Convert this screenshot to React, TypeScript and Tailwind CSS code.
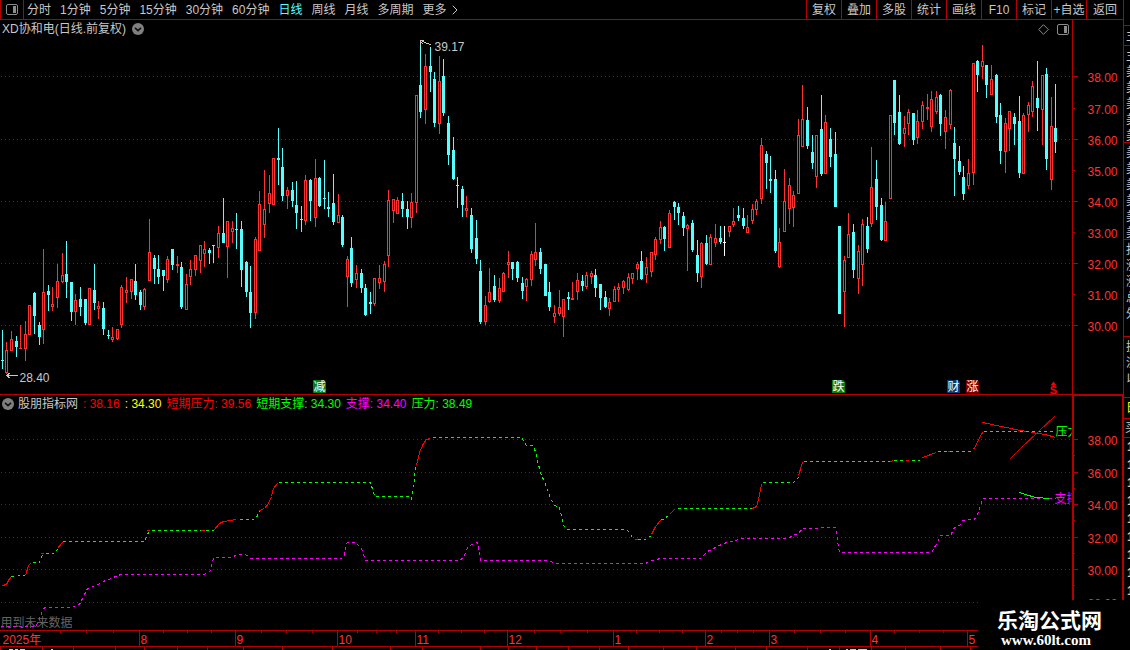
import { ChevronRight } from "lucide-react";

const RED = "#ff3232";
const CYAN = "#54ffff";
const LINE = "#b40000";
const GREEN = "#00ff00";
const MAGENTA = "#ff00ff";

const FONT =
  "font-['Liberation_Sans','Noto_Sans_CJK_SC',sans-serif] text-[12px]";

const PERIODS = [
  "分时",
  "1分钟",
  "5分钟",
  "15分钟",
  "30分钟",
  "60分钟",
  "日线",
  "周线",
  "月线",
  "多周期",
];

const TOOLS = ["复权", "叠加", "多股", "统计", "画线", "F10", "标记", "+自选", "返回"];

type Kind = "r" | "c" | "w";
// x, high, body top, body bottom, low, kind
type Candle = [number, number, number, number, number, Kind];

const CANDLES: Candle[] = [
  [2, 330, 360, 361, 369, "c"], [6, 342, 350, 373, 374, "r"], [11, 331, 339, 351, 351, "r"],
  [16, 336, 341, 347, 357, "c"], [20, 325, 348, 349, 349, "r"], [25, 321, 334, 349, 361, "r"],
  [29, 305, 305, 335, 335, "r"], [34, 292, 293, 316, 334, "c"], [39, 322, 325, 337, 345, "c"],
  [43, 249, 292, 330, 344, "r"], [48, 285, 291, 295, 311, "c"], [52, 287, 304, 307, 311, "r"],
  [57, 264, 281, 298, 308, "r"], [62, 253, 275, 282, 283, "r"], [66, 241, 274, 282, 298, "c"],
  [71, 282, 282, 312, 321, "c"], [75, 294, 300, 312, 325, "r"], [80, 287, 299, 307, 316, "c"],
  [85, 299, 299, 323, 325, "c"], [89, 288, 288, 325, 325, "r"], [94, 264, 290, 303, 310, "c"],
  [98, 301, 306, 309, 319, "r"], [103, 302, 308, 329, 335, "c"], [108, 330, 335, 336, 339, "c"],
  [112, 327, 337, 340, 342, "r"], [117, 329, 329, 339, 340, "r"], [121, 285, 287, 325, 328, "r"],
  [126, 277, 290, 293, 303, "r"], [131, 279, 279, 292, 299, "r"], [135, 264, 281, 295, 300, "c"],
  [140, 290, 292, 305, 310, "c"], [144, 288, 289, 307, 310, "r"], [149, 219, 252, 281, 281, "r"],
  [154, 255, 258, 269, 284, "c"], [158, 255, 269, 277, 284, "c"], [163, 270, 270, 276, 291, "c"],
  [167, 256, 259, 280, 283, "r"], [172, 249, 249, 265, 270, "c"], [177, 256, 264, 266, 273, "r"],
  [181, 262, 267, 307, 309, "c"], [186, 274, 284, 310, 310, "r"], [190, 260, 269, 277, 285, "r"],
  [195, 255, 255, 270, 276, "r"], [200, 245, 245, 261, 273, "r"], [204, 241, 249, 254, 267, "r"],
  [209, 248, 250, 253, 264, "c"], [213, 245, 245, 246, 263, "c"], [218, 226, 233, 248, 258, "r"],
  [223, 198, 233, 243, 243, "c"], [227, 221, 221, 247, 278, "r"], [232, 221, 228, 232, 243, "r"],
  [236, 213, 229, 230, 249, "c"], [241, 221, 229, 270, 287, "c"], [246, 261, 262, 292, 297, "c"],
  [250, 266, 292, 313, 328, "c"], [255, 237, 239, 313, 319, "r"], [259, 191, 204, 251, 251, "r"],
  [264, 170, 209, 225, 238, "r"], [269, 175, 193, 204, 213, "r"], [273, 158, 158, 205, 205, "r"],
  [278, 128, 158, 160, 185, "c"], [282, 148, 167, 196, 201, "c"], [287, 187, 190, 196, 209, "r"],
  [292, 182, 190, 201, 207, "c"], [296, 181, 205, 213, 229, "c"], [301, 206, 219, 220, 232, "c"],
  [305, 175, 180, 221, 225, "r"], [310, 179, 180, 201, 221, "c"], [315, 159, 178, 218, 227, "r"],
  [319, 177, 178, 206, 207, "c"], [324, 160, 198, 199, 209, "c"], [328, 192, 207, 209, 217, "c"],
  [333, 174, 203, 222, 225, "c"], [338, 194, 215, 223, 223, "r"], [342, 215, 217, 245, 247, "c"],
  [347, 256, 259, 277, 307, "r"], [351, 237, 248, 283, 287, "c"], [356, 265, 273, 280, 288, "r"],
  [361, 269, 273, 288, 293, "c"], [365, 284, 288, 315, 316, "c"], [370, 292, 302, 304, 314, "c"],
  [374, 278, 278, 304, 306, "r"], [379, 265, 278, 283, 289, "r"], [384, 261, 264, 282, 292, "r"],
  [388, 190, 200, 256, 267, "r"], [393, 199, 199, 211, 223, "r"], [397, 197, 200, 214, 214, "r"],
  [402, 193, 201, 209, 217, "c"], [407, 201, 209, 217, 229, "c"], [411, 193, 202, 218, 228, "r"],
  [416, 95, 95, 203, 213, "r"], [420, 42, 85, 112, 118, "c"], [425, 54, 66, 110, 124, "r"],
  [430, 47, 66, 72, 92, "c"], [434, 72, 79, 123, 127, "c"], [439, 56, 81, 124, 134, "r"],
  [443, 59, 76, 113, 116, "c"], [448, 116, 123, 155, 165, "c"], [453, 137, 150, 179, 180, "c"],
  [457, 177, 185, 186, 208, "c"], [462, 186, 189, 205, 217, "c"], [466, 196, 208, 211, 217, "r"],
  [471, 208, 215, 249, 253, "c"], [476, 220, 238, 259, 264, "c"], [480, 260, 271, 322, 324, "c"],
  [485, 296, 305, 322, 325, "r"], [489, 268, 292, 302, 303, "r"], [494, 275, 286, 300, 302, "c"],
  [499, 278, 288, 301, 303, "r"], [503, 272, 273, 292, 292, "r"], [508, 251, 262, 265, 278, "r"],
  [512, 262, 262, 269, 280, "c"], [517, 261, 262, 278, 282, "c"], [522, 277, 283, 291, 299, "c"],
  [526, 278, 279, 287, 301, "r"], [531, 251, 254, 280, 286, "r"], [535, 223, 252, 260, 266, "r"],
  [540, 248, 252, 269, 274, "c"], [545, 264, 264, 296, 296, "c"], [549, 282, 292, 307, 311, "c"],
  [554, 305, 313, 317, 323, "r"], [559, 290, 307, 314, 316, "r"], [563, 299, 299, 317, 337, "r"],
  [568, 292, 297, 299, 310, "c"], [572, 282, 298, 300, 300, "r"], [577, 273, 280, 292, 300, "r"],
  [582, 275, 281, 286, 291, "c"], [586, 272, 275, 287, 289, "r"], [591, 271, 273, 277, 284, "r"],
  [595, 269, 275, 288, 297, "c"], [600, 284, 284, 298, 310, "c"], [605, 291, 297, 307, 308, "c"],
  [609, 298, 302, 309, 316, "r"], [614, 286, 289, 302, 302, "r"], [618, 283, 287, 290, 302, "r"],
  [623, 280, 281, 288, 294, "r"], [628, 273, 277, 290, 291, "r"], [632, 273, 273, 279, 284, "r"],
  [637, 262, 264, 269, 280, "r"], [641, 251, 261, 279, 280, "c"], [646, 257, 267, 275, 283, "r"],
  [651, 252, 252, 272, 277, "r"], [655, 237, 239, 255, 260, "r"], [660, 221, 227, 240, 244, "r"],
  [664, 226, 227, 239, 251, "c"], [669, 210, 213, 248, 248, "r"], [674, 201, 202, 207, 220, "c"],
  [678, 203, 207, 213, 225, "c"], [683, 212, 216, 228, 236, "c"], [687, 224, 225, 229, 271, "r"],
  [692, 220, 223, 250, 252, "c"], [697, 240, 255, 273, 282, "c"], [701, 242, 243, 277, 288, "r"],
  [706, 235, 243, 264, 265, "c"], [710, 234, 237, 265, 265, "r"], [715, 224, 238, 243, 247, "r"],
  [720, 226, 238, 242, 244, "c"], [724, 226, 242, 243, 256, "w"], [729, 226, 226, 232, 237, "r"],
  [733, 208, 221, 225, 227, "r"], [738, 206, 215, 218, 221, "c"], [743, 208, 218, 226, 229, "c"],
  [747, 215, 227, 233, 233, "r"], [752, 204, 209, 221, 224, "r"], [756, 199, 201, 210, 215, "r"],
  [761, 138, 145, 199, 204, "r"], [766, 151, 154, 163, 189, "c"], [770, 156, 179, 181, 193, "c"],
  [775, 170, 179, 251, 253, "c"], [779, 228, 242, 267, 268, "r"], [784, 169, 201, 232, 232, "r"],
  [789, 178, 185, 209, 224, "r"], [793, 191, 195, 208, 227, "r"], [798, 119, 135, 194, 194, "r"],
  [802, 85, 119, 147, 147, "r"], [807, 107, 120, 146, 149, "c"], [812, 135, 152, 163, 169, "c"],
  [816, 135, 135, 177, 188, "r"], [821, 95, 129, 174, 176, "c"], [825, 115, 122, 174, 174, "r"],
  [830, 128, 139, 157, 167, "c"], [835, 132, 154, 207, 207, "c"], [839, 226, 226, 314, 314, "c"],
  [844, 256, 260, 292, 327, "r"], [848, 213, 234, 258, 258, "r"], [853, 224, 232, 270, 278, "c"],
  [858, 245, 251, 279, 294, "r"], [862, 219, 224, 265, 286, "r"], [867, 217, 226, 249, 253, "c"],
  [871, 147, 187, 224, 227, "r"], [876, 160, 179, 207, 220, "c"], [881, 198, 205, 240, 241, "c"],
  [885, 202, 221, 241, 241, "r"], [890, 115, 115, 199, 199, "r"], [894, 80, 80, 123, 135, "c"],
  [899, 95, 112, 144, 145, "c"], [904, 116, 128, 134, 147, "r"], [908, 109, 112, 124, 135, "r"],
  [913, 113, 113, 140, 145, "c"], [917, 110, 121, 138, 144, "r"], [922, 101, 105, 122, 129, "r"],
  [927, 94, 107, 109, 120, "r"], [931, 91, 99, 127, 132, "r"], [936, 91, 97, 112, 114, "r"],
  [940, 94, 95, 124, 136, "c"], [945, 110, 117, 132, 149, "r"], [950, 89, 90, 125, 129, "r"],
  [954, 127, 143, 159, 196, "c"], [959, 146, 161, 172, 175, "c"], [963, 166, 177, 194, 200, "c"],
  [968, 159, 173, 186, 189, "r"], [973, 63, 63, 173, 185, "r"], [977, 60, 61, 75, 92, "c"],
  [982, 45, 61, 67, 79, "r"], [986, 65, 65, 85, 98, "c"], [991, 65, 79, 95, 95, "r"],
  [996, 74, 75, 117, 123, "c"], [1000, 103, 115, 151, 164, "c"], [1005, 118, 123, 152, 173, "r"],
  [1009, 111, 111, 129, 151, "r"], [1014, 113, 117, 124, 145, "c"], [1019, 96, 121, 173, 178, "c"],
  [1023, 113, 115, 174, 174, "r"], [1028, 102, 105, 115, 132, "r"], [1032, 81, 86, 112, 117, "r"],
  [1037, 61, 98, 108, 131, "c"], [1042, 75, 75, 110, 145, "r"], [1046, 68, 74, 159, 170, "c"],
  [1051, 97, 126, 180, 190, "r"], [1055, 84, 128, 142, 153, "c"],
];

const PRICE_TICKS = [
  { y: 76, label: "38.00", major: true },
  { y: 108, label: "37.00" },
  { y: 139, label: "36.00", major: true },
  { y: 170, label: "35.00" },
  { y: 201, label: "34.00", major: true },
  { y: 232, label: "33.00" },
  { y: 263, label: "32.00", major: true },
  { y: 294, label: "31.00" },
  { y: 325, label: "30.00", major: true },
];

const LOWER_TICKS = [
  { y: 439, label: "38.00" },
  { y: 472, label: "36.00" },
  { y: 504, label: "34.00" },
  { y: 537, label: "32.00" },
  { y: 569, label: "30.00" },
  { y: 602, label: "28.00" },
];

const EVENTS = [
  { x: 313, text: "减", fill: "#0a7d0a" },
  { x: 832, text: "跌", fill: "#0a7d0a" },
  { x: 947, text: "财", fill: "#0a3b70" },
  { x: 966, text: "涨", fill: "#7d0000" },
];

const VALUES = [
  { text: ": 38.16", className: "text-[#ff0000]" },
  { text: ": 34.30", className: "text-[#ffff00]" },
  { text: "短期压力: 39.56", className: "text-[#ff0000]" },
  { text: "短期支撑: 34.30", className: "text-[#00ff00]" },
  { text: "支撑: 34.40", className: "text-[#ff00ff]" },
  { text: "压力: 38.49", className: "text-[#00ff00]" },
];

// pressure line, flat and falling stretches
const PRESSURE_FLAT = [
  "11,576 25,575",
  "32,562 39,562 42,554",
  "45,553 53,553 57,549",
  "62,541 144,541 148,532",
  "151,530 213,530",
  "239,519 253,519 256,517 259,511",
  "278,482 370,482 374,495 375,496 408,496 411,499 413,487 415,467",
  "432,437 521,437 526,445 532,445 535,451 537,460 540,472 545,484 550,498 554,505 559,507 563,525 567,529 626,529 629,532 632,537",
  "637,539 645,539 651,535",
  "660,519 663,519 669,514",
  "677,508 752,508",
  "762,482 793,482 798,477",
  "803,461 890,461",
  "893,460 919,460",
  "937,451 970,451 973,448",
  "983,431 1055,431",
];

// pressure line, rising stretches
const PRESSURE_UP = [
  "2,585 6,584 9,578 11,577",
  "25,575 28,565 30,563",
  "40,553 43,553",
  "57,548 62,542",
  "146,530 149,530",
  "200,530 204,530",
  "213,530 219,523 223,521 230,520 236,519",
  "259,510 264,508 268,503 271,496 273,488 277,483",
  "416,465 419,452 423,443 426,439 430,438",
  "634,539 637,539",
  "651,534 655,526 660,520",
  "669,514 674,509",
  "752,508 756,506 758,499 761,484",
  "798,475 802,462",
  "890,461 893,460",
  "905,460 908,460",
  "922,457 936,452",
  "947,451 949,451",
  "973,449 982,432",
];

const SUPPORT =
  "0,626 35,626 38,621 43,608 45,607 71,607 79,604 83,596 87,588 92,586 98,584 105,580 111,578 117,575 121,574 203,574 208,572 210,570 212,560 214,557 232,557 236,554 245,554 250,558 341,558 344,555 346,543 349,541 356,543 361,548 365,560 459,560 463,557 467,547 473,543 477,542 480,560 549,560 554,563 645,563 649,561 656,559 660,558 700,558 704,554 707,551 715,547 723,543 735,540 741,538 788,538 792,535 798,533 802,528 835,527 837,540 839,552 931,552 937,542 940,535 950,535 954,527 959,525 962,520 974,519 978,512 982,498 1055,498";

const MONTHS = [
  { x: 139, label: "8" },
  { x: 235, label: "9" },
  { x: 337, label: "10" },
  { x: 415, label: "11" },
  { x: 507, label: "12" },
  { x: 613, label: "1" },
  { x: 705, label: "2" },
  { x: 769, label: "3" },
  { x: 870, label: "4" },
  { x: 967, label: "5" },
];

const WEEK_TICKS = [
  60, 86, 113, 163, 187, 211, 261, 286, 312, 357, 376, 396, 438, 461, 484, 534, 560,
  587, 636, 659, 682, 721, 737, 753, 794, 820, 845, 894, 919, 943,
];

const FOOT_TICKS = [
  0, 42, 73, 115, 144, 177, 207, 243, 282, 332, 390, 422, 480, 508, 536, 568, 599,
  628, 663, 696, 735, 766, 807, 839, 871, 905, 940, 970,
];

const RAIL = [
  { text: "主", className: "h-[20px]" },
  { text: "主美美美美美", className: "h-[97px]" },
  { text: "美美美美美美", className: "h-[97px]" },
  { text: "报涨涨总外", className: "h-[97px]" },
  { text: "换流以", className: "h-[61px]" },
];

function TopBar() {
  return (
    <header className="flex h-[20px] items-stretch border-b border-[#b40000]">
      <button
        type="button"
        aria-label="侧栏"
        className="flex w-[24px] shrink-0 items-center justify-center border-x border-[#b40000]"
      >
        <PanelIcon />
      </button>
      <nav className="flex min-w-0 flex-1 items-center gap-[9px] overflow-hidden pl-[3px] whitespace-nowrap">
        {PERIODS.map((p) => (
          <button
            key={p}
            type="button"
            className={p === "日线" ? "text-[#54ffff]" : "text-[#c8c8c8]"}
          >
            {p}
          </button>
        ))}
        <button type="button" className="flex items-center text-[#c8c8c8]">
          更多
          <ChevronRight size={16} strokeWidth={1.5} />
        </button>
      </nav>
      <div className="flex shrink-0">
        {TOOLS.map((t) => (
          <button
            key={t}
            type="button"
            className="flex w-[35px] items-center justify-center border-l border-[#b40000] whitespace-nowrap text-[#c8c8c8] last:w-[37px]"
          >
            {t}
          </button>
        ))}
      </div>
    </header>
  );
}

function PanelIcon() {
  return (
    <svg width="12" height="11" viewBox="0 0 12 11" aria-hidden="true">
      <rect x="0.5" y="0.5" width="11" height="10" rx="1.5" fill="none" stroke="#8c8c8c" />
      <rect x="7" y="2" width="3" height="7" fill="#8c8c8c" />
    </svg>
  );
}

function RoundChevron() {
  return (
    <svg width="12" height="12" viewBox="0 0 12 12" aria-hidden="true">
      <circle cx="6" cy="6" r="6" fill="#808080" />
      <path d="M3 4.8 6 7.6 9 4.8" fill="none" stroke="#101010" strokeWidth="1.6" />
    </svg>
  );
}

function CandleShape({ candle }: { candle: Candle }) {
  const [x, high, top, bottom, low, kind] = candle;
  const color = kind === "r" ? RED : kind === "c" ? CYAN : "#ffffff";
  const fill = kind === "r" ? "#000000" : color;
  const flat = bottom - top < 2;

  return (
    <g stroke={color} fill={fill}>
      <line x1={x} x2={x} y1={high - 0.5} y2={low - 0.5} />
      {flat ? (
        <line x1={x - 1.5} x2={x + 1.5} y1={top} y2={top} />
      ) : (
        <rect x={x - 1} y={top} width={2} height={bottom - top - 1} />
      )}
    </g>
  );
}

function PriceChart() {
  return (
    <svg viewBox="-0.5 37.5 1123 356" className="block w-full" fontSize="12">
      <g shapeRendering="crispEdges">
        {PRICE_TICKS.map((t) => (
          <g key={t.label} stroke={LINE}>
            {t.major && (
              <line x1="0.5" x2="1072" y1={t.y} y2={t.y} strokeDasharray="1 3" />
            )}
            <line x1="1072" x2={t.major ? 1077.5 : 1074.5} y1={t.y} y2={t.y} />
          </g>
        ))}
        <line x1="1072" x2="1072" y1="37" y2="394" stroke={LINE} />
        {CANDLES.map((c) => (
          <CandleShape key={c[0]} candle={c} />
        ))}
      </g>

      {PRICE_TICKS.map((t) => (
        <text key={t.label} x="1087" y={t.y + 5} fill={RED}>
          {t.label}
        </text>
      ))}

      <g fill="none" stroke="#c8c8c8" shapeRendering="crispEdges">
        <path d="M420 44V40H423M421 40L426 43L431 44M421 42L423 44" />
        <path d="M6 375H17M10 372L6 375L10 378" />
      </g>
      <text x="434" y="50" fill="#c8c8c8">
        39.17
      </text>
      <text x="19" y="381" fill="#c8c8c8">
        28.40
      </text>

      {EVENTS.map((e) => (
        <g key={e.text}>
          <path d={`M${e.x - 0.5} 379.5h11l2 2v11h-13z`} fill={e.fill} />
          <text x={e.x + 6} y="390" fill="#ffffff" textAnchor="middle">
            {e.text}
          </text>
        </g>
      ))}
      <path d="M1053 381l3 4h-6z" fill="#ff0000" />
      <text x="1053" y="393" fill="#ff0000" fontSize="11" fontWeight="bold" textAnchor="middle">
        S
      </text>
    </svg>
  );
}

function IndicatorChart() {
  return (
    <svg viewBox="-0.5 411.5 1123 218" className="block w-full" fontSize="12">
      <defs>
        <clipPath id="plot">
          <rect x="0" y="411" width="1071" height="219" />
        </clipPath>
      </defs>

      <text x="0" y="626" fill="#646464">
        用到未来数据
      </text>

      <g shapeRendering="crispEdges">
        {LOWER_TICKS.map((t) => (
          <g key={t.label} stroke={LINE}>
            <line x1="0.5" x2="1072" y1={t.y} y2={t.y} strokeDasharray="1 3" />
            <line x1="1072" x2="1077.5" y1={t.y} y2={t.y} />
            <line x1="1072" x2="1074.5" y1={t.y + 16} y2={t.y + 16} />
          </g>
        ))}
        <line x1="1072.5" x2="1072.5" y1="411" y2="630" stroke={LINE} strokeWidth="2" />
        <line x1="1122" x2="1122" y1="411" y2="630" stroke={LINE} />

        <g fill="none" stroke={GREEN} strokeDasharray="3 3">
          {PRESSURE_FLAT.map((points) => (
            <polyline key={points} points={points} />
          ))}
        </g>
        <g fill="none" stroke="#ff0000">
          {PRESSURE_UP.map((points) => (
            <polyline key={points} points={points} />
          ))}
          <polyline points="982,422 1020,430 1026,431" />
          <polyline points="1031,432 1045,434 1055,437" />
          <polyline points="1009,459 1020,448 1055,415" stroke="#d00000" />
        </g>
        <polyline points={SUPPORT} fill="none" stroke={MAGENTA} strokeDasharray="3 3" />
        <polyline points="1019,492 1025,494 1035,497 1049,498" fill="none" stroke={GREEN} />
      </g>

      <g clipPath="url(#plot)">
        <text x="1055" y="435" fill={GREEN}>
          压力
        </text>
        <text x="1054" y="502" fill={MAGENTA}>
          支撑
        </text>
      </g>
      {LOWER_TICKS.map((t) => (
        <text key={t.label} x="1087" y={t.y + 5} fill={RED}>
          {t.label}
        </text>
      ))}
    </svg>
  );
}

function TimeAxis() {
  return (
    <svg viewBox="-0.5 629.5 1123 20" className="block w-full" fontSize="12">
      <g stroke={LINE} shapeRendering="crispEdges">
        <path d="M-1 630H1123M-1 646H1123" />
        {MONTHS.map((m) => (
          <line key={m.label} x1={m.x} x2={m.x} y1="630" y2="646" />
        ))}
        {WEEK_TICKS.map((x) => (
          <line key={x} x1={x} x2={x} y1="630" y2="632.5" />
        ))}
        {FOOT_TICKS.map((x) => (
          <line key={x} x1={x} x2={x} y1="646" y2="650" />
        ))}
      </g>
      <path
        d="M8 649h4M14 649h3M19 649h5M50 649h2M828 649h2M845 649h2M849 649h6M857 649h9"
        stroke="#c8c8c8"
        shapeRendering="crispEdges"
      />
      <text x="2" y="643" fill={RED}>
        2025年
      </text>
      {MONTHS.map((m) => (
        <text key={m.label} x={m.x + 1} y="643" fill={RED}>
          {m.label}
        </text>
      ))}
    </svg>
  );
}

function SideRail() {
  return (
    <aside className="w-[7px] shrink-0 overflow-hidden border-l border-[#b40000] pt-[25px] text-[#c8c8c8]">
      {RAIL.map((r, i) => (
        <div
          key={i}
          className={`w-[16px] overflow-hidden border-t border-[#b40000] pt-0.5 pl-[2px] leading-[16px] break-all ${r.className}`}
        >
          {r.text}
        </div>
      ))}
      <div className="h-[21px] w-[16px] border-t border-[#b40000] pt-0.5 pl-[2px] leading-[16px] text-[#ffff00]">
        日
      </div>
      <div className="h-[19px] w-[16px] border-t border-[#b40000] pl-[1px] leading-[18px]">
        买
      </div>
      <div className="w-[16px] border-t border-[#b40000] pl-[3px] font-bold leading-[18px]">
        {[1, 2, 3, 4, 5, 6, 7, 8, 9].map((n) => (
          <div key={n}>1</div>
        ))}
      </div>
    </aside>
  );
}

export default function App() {
  return (
    <div className={`relative flex min-h-screen overflow-hidden bg-black leading-none ${FONT}`}>
      <main className="min-w-0 flex-1">
        <TopBar />

        <section>
          <div className="flex h-[18px] text-[#c8c8c8]">
            <div className="flex min-w-0 flex-1 items-center gap-[6px] pl-0.5 whitespace-nowrap">
              <h1>XD协和电(日线.前复权)</h1>
              <button type="button" aria-label="展开">
                <RoundChevron />
              </button>
              <div className="ml-auto flex items-center gap-2 pr-[3px]">
                <svg width="11" height="11" viewBox="0 0 11 11" aria-hidden="true">
                  <path d="M5.5 .7 10.3 5.5 5.5 10.3 .7 5.5z" fill="none" stroke="#8c8c8c" />
                </svg>
                <PanelIcon />
              </div>
            </div>
            <div className="w-[51px] shrink-0 border-l border-[#b40000]" />
          </div>
          <PriceChart />
        </section>

        <section className="border-t border-[#b40000]">
          <div className="flex h-[17px]">
            <div className="flex min-w-0 flex-1 items-center gap-[5px] pl-0.5 whitespace-nowrap">
              <button type="button" className="flex items-center gap-1 text-[#c8c8c8]">
                <RoundChevron />
                股朋指标网
              </button>
              {VALUES.map((v) => (
                <span key={v.text} className={v.className}>
                  {v.text}
                </span>
              ))}
            </div>
            <div className="w-[51px] shrink-0 border-t border-r border-l-2 border-[#b40000]" />
          </div>
          <IndicatorChart />
          <TimeAxis />
        </section>
      </main>

      <SideRail />

      <a
        href="#"
        className="absolute right-0 bottom-0 flex h-[50px] w-[152px] flex-col items-start bg-black pt-[7px] pl-[19px] text-white"
      >
        <span className="font-['Noto_Sans_CJK_SC',sans-serif] text-[21px] leading-[24px] font-bold">
          乐淘公式网
        </span>
        <span className="pl-1 font-['Liberation_Serif',serif] text-[15px] leading-[18px] font-bold">
          www.60lt.com
        </span>
      </a>
    </div>
  );
}
